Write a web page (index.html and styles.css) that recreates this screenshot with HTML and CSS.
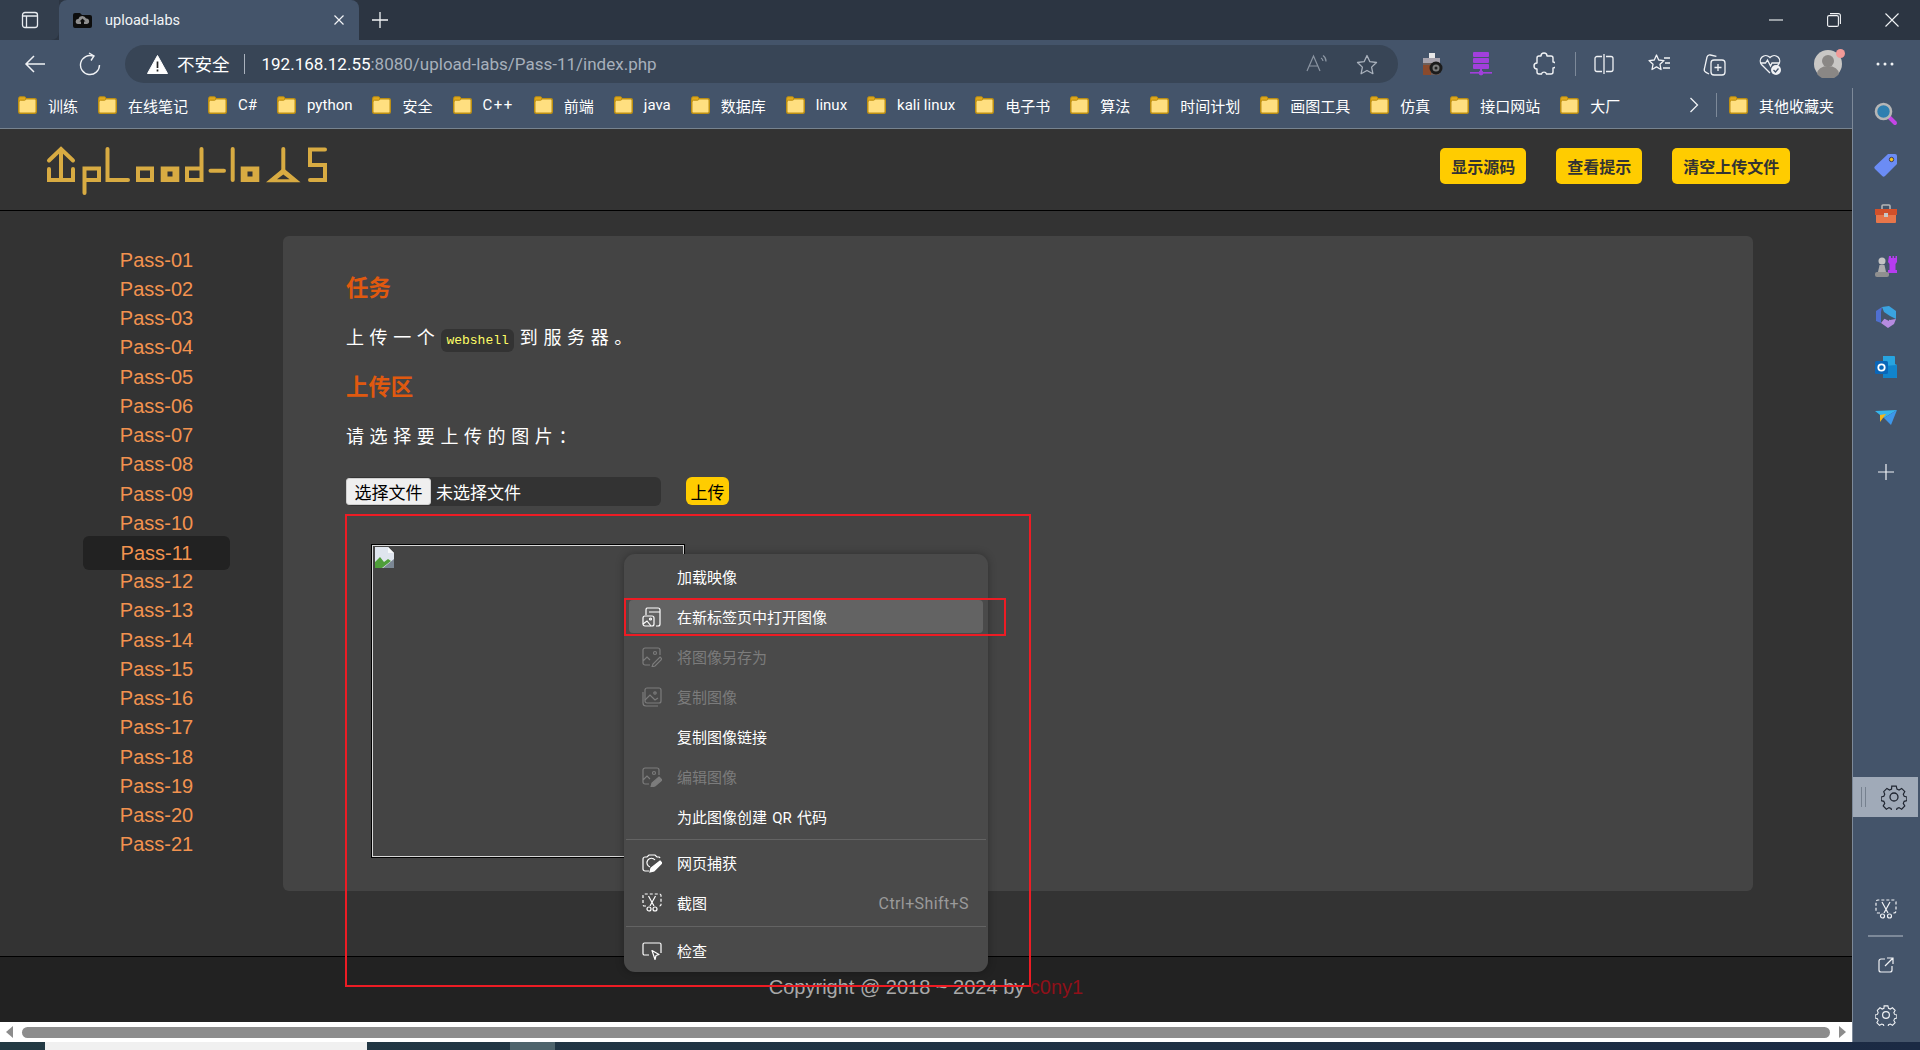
FILE: index.html
```html
<!DOCTYPE html>
<html lang="zh">
<head>
    <meta charset="UTF-8">
    <title>upload-labs</title>
    <link rel="stylesheet" href="styles.css">
</head>
<body>
    <svg class="defs" width="0" height="0">
        <symbol id="folder" viewBox="0 0 19 18">
            <rect x="0.75" y="2.75" width="17.5" height="14.5" rx="1.5" fill="#ffdf80" stroke="#bd8f12" stroke-width="1.5"/>
            <path d="M0.75 5.5V2a1.2 1.2 0 0 1 1.2-1.2h4.5a1.2 1.2 0 0 1 1.2 1.2v1.2a1 1 0 0 1-1 1H2.5z" fill="#e3aa1c" stroke="#bd8f12" stroke-width="1"/>
        </symbol>
    </svg>

    <!-- tab strip -->
    <div class="tabstrip">
        <div class="tab-toggle">
            <svg width="18" height="18" viewBox="0 0 18 18" fill="none" stroke="#e8ebef" stroke-width="1.3"><rect x="1.5" y="1.5" width="15" height="15" rx="2.5"/><path d="M1.5 5h15M5.5 5v11.5" /></svg>
        </div>
        <div class="tab">
            <svg width="19" height="16" viewBox="0 0 19 16"><path d="M0 3a2 2 0 0 1 2-2h5l2 2h8a2 2 0 0 1 2 2v9a2 2 0 0 1-2 2H2a2 2 0 0 1-2-2z" fill="#0d0d0d"/><path d="M5 12a2.5 2.5 0 0 1 .4-5A4 4 0 0 1 13 6.5 2.8 2.8 0 0 1 14 12h-3V9.5h1.5L9.5 6.5l-3 3H8V12z" fill="#8f8f8f"/></svg>
            <span class="tab-title">upload-labs</span>
            <svg class="tab-close" width="12" height="12" viewBox="0 0 12 12" stroke="#f2f4f6" stroke-width="1.2"><path d="M1.5 1.5l9 9M10.5 1.5l-9 9"/></svg>
        </div>
        <svg class="tab-new" width="18" height="18" viewBox="0 0 18 18" stroke="#f2f4f6" stroke-width="1.3"><path d="M9 1v16M1 9h16"/></svg>
        <div class="win-btns">
            <svg width="14" height="14" viewBox="0 0 14 14" stroke="#f2f4f6" stroke-width="1.1"><path d="M0 7h14"/></svg>
            <svg width="14" height="14" viewBox="0 0 14 14" fill="none" stroke="#f2f4f6" stroke-width="1.1"><rect x="0.6" y="2.6" width="10.8" height="10.8" rx="1.5"/><path d="M3 .6h8.4a2 2 0 0 1 2 2V11"/></svg>
            <svg width="14" height="14" viewBox="0 0 14 14" stroke="#f2f4f6" stroke-width="1.1"><path d="M.5.5l13 13M13.5.5l-13 13"/></svg>
        </div>
    </div>

    <!-- address bar -->
    <div class="toolbar">
        <svg class="tb-back" width="22" height="20" viewBox="0 0 22 20" fill="none" stroke="#f0f2f5" stroke-width="1.5"><path d="M21 10H2M10 2l-8 8 8 8"/></svg>
        <svg class="tb-reload" width="22" height="24" viewBox="0 0 22 24" fill="none" stroke="#f0f2f5" stroke-width="1.4"><path d="M14.500 4.200A9.500 9.500 0 1 0 20.500 13"/><path d="M10 1l5 3-3 4.500" /></svg>
        <div class="addr">
            <svg class="addr-warn" width="21" height="19" viewBox="0 0 21 19"><path d="M10.5 0.5L20.5 18.5H0.5z" fill="#fff" stroke="#fff" stroke-linejoin="round"/><path d="M10.5 6.5v6.5M10.5 14.5v2" stroke="#222" stroke-width="1.7"/></svg>
            <span class="addr-warntext">不安全</span>
            <span class="addr-sep"></span>
            <span class="addr-url"><b>192.168.12.55</b>:8080/upload-labs/Pass-11/index.php</span>
            <svg class="addr-read" width="22" height="20" viewBox="0 0 22 20" fill="none" stroke="#8b95a2" stroke-width="1.2"><path d="M1 17L7.5 2 14 17M3.5 12h8"/><path d="M15 4a4 4 0 0 1 2 3M17 1.5a7 7 0 0 1 3 6"/></svg>
            <svg class="addr-star" width="22" height="21" viewBox="0 0 22 21" fill="none" stroke="#a9b1bc" stroke-width="1.3"><path d="M11 1.5l2.9 6.2 6.6.8-4.9 4.6 1.3 6.6L11 16.5l-5.9 3.2 1.3-6.6L1.5 8.5l6.6-.8z" stroke-linejoin="round"/></svg>
        </div>
        <div class="tb-icons">
            <svg class="ti-camera" width="22" height="24" viewBox="0 0 22 24"><rect x="7" y="1" width="6" height="5" fill="#e8e8e8"/><rect x="1" y="6" width="17" height="17" rx="2" fill="#6b5d5a"/><rect x="1" y="6" width="17" height="5" fill="#a7a3ad"/><rect x="1" y="13" width="8" height="10" fill="#8a4a2c"/><circle cx="14" cy="16" r="6.5" fill="#1c1c1c"/><circle cx="14" cy="16" r="3.5" fill="#7b7b7b"/><circle cx="14" cy="16" r="1.5" fill="#222"/></svg>
            <svg class="ti-server" width="22" height="24" viewBox="0 0 22 24" fill="#a23fdc"><rect x="3" y="0" width="16" height="5" rx="1"/><rect x="3" y="6" width="16" height="5" rx="1"/><rect x="3" y="12" width="16" height="5" rx="1"/><rect x="10" y="17" width="2" height="4"/><rect x="0" y="20" width="22" height="1.6"/><circle cx="11" cy="21" r="2.4"/></svg>
            <svg class="ti-puzzle" width="22" height="24" viewBox="0 0 22 24" fill="none" stroke="#f0f2f5" stroke-width="1.4"><path d="M8 4a3 3 0 0 1 6 0h4a2 2 0 0 1 2 2v4a3 3 0 0 1 0 6v4a2 2 0 0 1-2 2h-4.5a2.6 2.6 0 0 0-5 0H6a2 2 0 0 1-2-2v-3a3 3 0 0 1 0-6V6a2 2 0 0 1 2-2z" stroke-linejoin="round"/></svg>
            <span class="ti-sep"></span>
            <svg class="ti-split" width="20" height="20" viewBox="0 0 20 20" fill="none" stroke="#f0f2f5" stroke-width="1.3"><path d="M8 2.5H3a2 2 0 0 0-2 2v11a2 2 0 0 0 2 2h5M12 2.5h5a2 2 0 0 1 2 2v11a2 2 0 0 1-2 2h-5M10 0v20"/></svg>
            <svg class="ti-fav" width="24" height="24" viewBox="0 0 24 24" fill="none" stroke="#f0f2f5" stroke-width="1.3"><path d="M9.5 3l2.2 5 5.3.6-4 3.7 1 5.2-4.5-2.6L5 17.5l1-5.2-4-3.7 5.3-.6z" stroke-linejoin="round"/><path d="M17 6h6M18 11h5M16 16h7"/></svg>
            <svg class="ti-coll" width="24" height="24" viewBox="0 0 24 24" fill="none" stroke="#f0f2f5" stroke-width="1.3"><path d="M7 22l-3-1.6a3 3 0 0 1-1.600-3.600L5 5a3 3 0 0 1 3.400-2l6 1.400"/><rect x="9" y="8" width="14" height="15" rx="3"/><path d="M16 12v7M12.500 15.500h7"/></svg>
            <svg class="ti-heart" width="24" height="24" viewBox="0 0 24 24" fill="none" stroke="#f0f2f5" stroke-width="1.3"><path d="M12 21L3.500 12.500a5.500 5.500 0 0 1 8-7.500l.5.600.5-.6a5.500 5.500 0 0 1 8 7.500L19 14"/><path d="M2.500 11h5l2-3 3 6 1.500-3h7"/><circle cx="18" cy="18" r="5" fill="#f0f2f5" stroke="none"/><path d="M15.500 18l2 2 3-3.500" stroke="#44546a"/></svg>
            <span class="avatar">
                <svg width="28" height="28" viewBox="0 0 28 28"><circle cx="14" cy="14" r="14" fill="#c9c7c5"/><circle cx="14" cy="11" r="6" fill="#8a8785"/><path d="M3 24a11 8 0 0 1 22 0 14 14 0 0 1-22 0z" fill="#8a8785"/></svg>
                <i class="avatar-dot"></i>
            </span>
            <svg class="ti-more" width="18" height="4" viewBox="0 0 18 4" fill="#f0f2f5"><circle cx="2" cy="2" r="1.500"/><circle cx="9" cy="2" r="1.500"/><circle cx="16" cy="2" r="1.500"/></svg>
        </div>
    </div>

    <div class="frame">
        <div class="viewport">
            <!-- bookmarks -->
            <div class="bookmarks">
                <a class="bm"><svg class="bm-ico"><use href="#folder"/></svg>训练</a>
                <a class="bm"><svg class="bm-ico"><use href="#folder"/></svg>在线笔记</a>
                <a class="bm"><svg class="bm-ico"><use href="#folder"/></svg>C#</a>
                <a class="bm"><svg class="bm-ico"><use href="#folder"/></svg>python</a>
                <a class="bm"><svg class="bm-ico"><use href="#folder"/></svg>安全</a>
                <a class="bm bm-wide"><svg class="bm-ico"><use href="#folder"/></svg>C++</a>
                <a class="bm"><svg class="bm-ico"><use href="#folder"/></svg>前端</a>
                <a class="bm"><svg class="bm-ico"><use href="#folder"/></svg>java</a>
                <a class="bm"><svg class="bm-ico"><use href="#folder"/></svg>数据库</a>
                <a class="bm"><svg class="bm-ico"><use href="#folder"/></svg>linux</a>
                <a class="bm"><svg class="bm-ico"><use href="#folder"/></svg>kali linux</a>
                <a class="bm"><svg class="bm-ico"><use href="#folder"/></svg>电子书</a>
                <a class="bm"><svg class="bm-ico"><use href="#folder"/></svg>算法</a>
                <a class="bm"><svg class="bm-ico"><use href="#folder"/></svg>时间计划</a>
                <a class="bm"><svg class="bm-ico"><use href="#folder"/></svg>画图工具</a>
                <a class="bm"><svg class="bm-ico"><use href="#folder"/></svg>仿真</a>
                <a class="bm"><svg class="bm-ico"><use href="#folder"/></svg>接口网站</a>
                <a class="bm"><svg class="bm-ico"><use href="#folder"/></svg>大厂</a>
                <div class="bm-end">
                    <svg width="10" height="16" viewBox="0 0 10 16" fill="none" stroke="#f0f2f5" stroke-width="1.3"><path d="M1.500 1l7 7-7 7"/></svg>
                    <span class="bm-sep"></span>
                    <a class="bm"><svg class="bm-ico"><use href="#folder"/></svg>其他收藏夹</a>
                </div>
            </div>

            <!-- page -->
            <header class="site-head">
                <svg class="logo" width="286" height="52" viewBox="0 0 286 52" fill="none" stroke="#d8ab42" stroke-width="4" stroke-linejoin="miter" stroke-linecap="round">
                    <path d="M4 15.500L16 4 28 15.500M16 4v31M4 24v11h24V24"/>
                    <path d="M39.500 48V23.500H54V35H39.500"/>
                    <path d="M62.500 4v31H83"/>
                    <rect x="93" y="23.500" width="14" height="11.500"/>
                    <path d="M115.700 21.500h18.600V37h-18.600zM122.500 26.500v5h5v-5z" fill="#d8ab42" fill-rule="evenodd" stroke="none"/>
                    <path d="M156.500 4v31H142V23.500h14.500"/>
                    <path d="M165.500 25.700h13.500"/>
                    <path d="M187.700 4v31"/>
                    <path d="M195.700 21.500h18.600V37h-18.600zM202.500 26.500v5h5v-5z" fill="#d8ab42" fill-rule="evenodd" stroke="none"/>
                    <path d="M238.300 4v22"/>
                    <path d="M238.300 23L255.500 37.300H221zM238.300 29.500L232 34.300h12.600z" fill="#d8ab42" fill-rule="evenodd" stroke="none"/>
                    <path d="M280 4.500h-15V20h15v15h-15"/>
                </svg>
                <nav class="head-btns">
                    <a class="yellow-btn">显示源码</a>
                    <a class="yellow-btn">查看提示</a>
                    <a class="yellow-btn">清空上传文件</a>
                </nav>
            </header>

            <div class="content">
                <ul class="pass-list">
                    <li>Pass-01</li>
                    <li>Pass-02</li>
                    <li>Pass-03</li>
                    <li>Pass-04</li>
                    <li>Pass-05</li>
                    <li>Pass-06</li>
                    <li>Pass-07</li>
                    <li>Pass-08</li>
                    <li>Pass-09</li>
                    <li>Pass-10</li>
                    <li class="active">Pass-11</li>
                    <li>Pass-12</li>
                    <li>Pass-13</li>
                    <li>Pass-14</li>
                    <li>Pass-15</li>
                    <li>Pass-16</li>
                    <li>Pass-17</li>
                    <li>Pass-18</li>
                    <li>Pass-19</li>
                    <li>Pass-20</li>
                    <li>Pass-21</li>
                </ul>
                <section class="panel">
                    <h2>任务</h2>
                    <p>上传一个<code>webshell</code>到服务器。</p>
                    <h2>上传区</h2>
                    <p>请选择要上传的图片：</p>
                    <form class="upload-form">
                        <div class="file-input">
                            <span class="file-btn">选择文件</span>
                            <span class="file-name">未选择文件</span>
                        </div>
                        <span class="submit-btn">上传</span>
                    </form>
                    <div class="broken-img">
                        <svg width="19" height="21" viewBox="0 0 19 21"><path d="M0 0h13l6 6v15H0z" fill="#dfe5ee"/><path d="M13 0l6 6h-6z" fill="#f7f9fb"/><path d="M0 21v-6l5-5 4 5 4-3 3 2-9 7z" fill="#4f9e3a"/><path d="M8 21l11-9v9z" fill="#7b8794"/></svg>
                    </div>
                </section>
            </div>

            <footer class="site-foot">Copyright @ 2018 ~ 2024 by <span class="author">c0ny1</span></footer>

            <div class="hscroll">
                <svg width="7" height="12" viewBox="0 0 7 12" fill="#8c8c8c"><path d="M7 0v12L0 6z"/></svg>
                <div class="hscroll-thumb"></div>
                <svg width="7" height="12" viewBox="0 0 7 12" fill="#8c8c8c"><path d="M0 0v12l7-6z"/></svg>
            </div>
        </div>

        <!-- edge sidebar -->
        <aside class="edge">
            <svg class="edge-ico" viewBox="0 0 24 24"><path d="M14 14l7 7" stroke="#c545e6" stroke-width="4" stroke-linecap="round"/><circle cx="9.500" cy="9.500" r="7.500" fill="#2f7fb0" stroke="#b6b6b6" stroke-width="2.600"/></svg>
            <svg class="edge-ico" viewBox="0 0 24 24"><path d="M14 1h7a2 2 0 0 1 2 2v8L11 23a2 2 0 0 1-2.800 0L1 16a2 2 0 0 1 0-2.800z" fill="#6b8cf5"/><circle cx="17.500" cy="6.500" r="2.200" fill="#f2c21a" stroke="#3a3a60"/></svg>
            <svg class="edge-ico" viewBox="0 0 24 24"><path d="M8 6V3a1 1 0 0 1 1-1h6a1 1 0 0 1 1 1v3" fill="none" stroke="#b5b5b5" stroke-width="1.600"/><path d="M1 6h22v6H1z" fill="#d2502a"/><path d="M2 12h20v7a1 1 0 0 1-1 1H3a1 1 0 0 1-1-1z" fill="#e8764a"/><rect x="10" y="10" width="4" height="4" fill="#c8c8c8"/></svg>
            <svg class="edge-ico" viewBox="0 0 24 24"><path d="M16 2h2v2h1.500V2h1.500v2h1.500V2H24v6l-1.500 2v6H24v3h-9v-3h1.500v-6L15 8z" transform="translate(-1 0)" fill="#b63cf0"/><circle cx="8" cy="7" r="3.500" fill="#c4c4c4"/><path d="M5.500 11h5l1.500 7H4z" fill="#adadad"/><rect x="1" y="18" width="14" height="5" rx="2" fill="#8f8f8f"/></svg>
            <svg class="edge-ico" viewBox="0 0 24 24"><path d="M8 2l7-1 7 5v8l-6-3-6-4z" fill="#3aa3e0"/><path d="M8 2L2 6v10l5 2V7z" fill="#4f6fd0"/><path d="M7 18l7 5 6-4 2-5-6 1-5-2z" fill="#b68be0"/><path d="M9 9l6 3v4l-6-3z" fill="#44546a"/></svg>
            <svg class="edge-ico" viewBox="0 0 24 24"><path d="M9 1h11a1 1 0 0 1 1 1v7l2 1v12a1 1 0 0 1-1 1H9z" fill="#27a4e0"/><path d="M9 11l14-1v12a1 1 0 0 1-1 1H9z" fill="#1184cc"/><rect x="1" y="6" width="13" height="13" rx="1.500" fill="#0a66b8"/><circle cx="7.500" cy="12.500" r="3.200" fill="none" stroke="#fff" stroke-width="1.800"/></svg>
            <svg class="edge-ico" viewBox="0 0 24 24"><path d="M1 5l22-1L10 12z" fill="#35b6ee"/><path d="M10 12L23 4 17 19z" fill="#3e97ea"/><path d="M6 9l6-1-6 8z" fill="#f3b51c"/></svg>
            <svg class="edge-plus" width="16" height="16" viewBox="0 0 16 16" stroke="#f0f2f5" stroke-width="1.200"><path d="M8 0v16M0 8h16"/></svg>
            <div class="edge-fill"></div>
            <div class="edge-active">
                <span class="edge-grip"></span>
                <svg width="26" height="26" viewBox="0 0 26 26" fill="none" stroke="#1f2530" stroke-width="1.300"><path d="M10.500 1h5l.8 3.200 2.300 1 2.900-1.700 3.500 3.500-1.700 2.900 1 2.300 0 0 3 .8v4l-3 .8-1 2.300 1.700 2.900-3.500 3.500-2.900-1.700-2.300 1-.8 3h-5l-.8-3-2.300-1-2.900 1.700-3.500-3.500 1.700-2.900-1-2.300-3-.8v-4l3-.8 1-2.300L1.600 7l3.500-3.500L8 5.200l2.300-1z" transform="translate(1.300 1.300) scale(.9)"/><circle cx="13" cy="13" r="4"/></svg>
            </div>
            <svg class="edge-cut" width="22" height="20" viewBox="0 0 22 20" fill="none" stroke="#f0f2f5" stroke-width="1.200"><path d="M5 14H3a2 2 0 0 1-2-2V3a2 2 0 0 1 2-2h16a2 2 0 0 1 2 2v9a2 2 0 0 1-2 2h-2" stroke-dasharray="3 2"/><path d="M7 3l6 11M15 3L9 14"/><circle cx="7.500" cy="17" r="2"/><circle cx="14.500" cy="17" r="2"/></svg>
            <span class="edge-line"></span>
            <svg class="edge-ext" width="16" height="16" viewBox="0 0 16 16" fill="none" stroke="#f0f2f5" stroke-width="1.200"><path d="M7 2H3a2 2 0 0 0-2 2v9a2 2 0 0 0 2 2h9a2 2 0 0 0 2-2V9M9 1h6v6M15 1L7 9"/></svg>
            <svg class="edge-gear" width="22" height="22" viewBox="0 0 26 26" fill="none" stroke="#f0f2f5" stroke-width="1.400"><path d="M10.500 1h5l.8 3.200 2.300 1 2.900-1.700 3.500 3.500-1.700 2.900 1 2.300 3 .8v4l-3 .8-1 2.300 1.700 2.900-3.500 3.500-2.900-1.700-2.300 1-.8 3h-5l-.8-3-2.300-1-2.900 1.700-3.500-3.500 1.700-2.900-1-2.300-3-.8v-4l3-.8 1-2.300L1.600 7l3.500-3.500L8 5.200l2.300-1z" transform="translate(1.300 1.300) scale(.9)"/><circle cx="13" cy="13" r="4"/></svg>
        </aside>
    </div>

    <!-- bit of taskbar under the window -->
    <div class="taskbar">
        <span class="task-a"></span>
        <span class="task-b"></span>
    </div>

    <!-- context menu -->
    <div class="menu">
        <div class="menu-row"><span class="menu-ico"></span>加载映像</div>
        <div class="menu-row hover">
            <svg class="menu-ico" viewBox="0 0 20 20" fill="none" stroke="#fff" stroke-width="1.200"><path d="M7 1h9a2 2 0 0 1 2 2v14a2 2 0 0 1-2 2h-2M7 5h11M7 1L5 1a2 2 0 0 0-1 2v5"/><rect x="1" y="9" width="11" height="10" rx="2"/><circle cx="8.500" cy="12" r="1"/><path d="M1 17l4-3 4 5"/></svg>
            在新标签页中打开图像
        </div>
        <div class="menu-row off">
            <svg class="menu-ico" viewBox="0 0 20 20" fill="none" stroke="#7c7c7c" stroke-width="1.200"><path d="M8 18H3a2 2 0 0 1-2-2V3a2 2 0 0 1 2-2h13a2 2 0 0 1 2 2v5M1 14l4-4 3 3"/><circle cx="13" cy="6" r="1.500"/><path d="M18 10l2 2-7 7-3 1 1-3z"/></svg>
            将图像另存为
        </div>
        <div class="menu-row off">
            <svg class="menu-ico" viewBox="0 0 20 20" fill="none" stroke="#7c7c7c" stroke-width="1.200"><rect x="3" y="1" width="16" height="15" rx="2"/><path d="M1 5v11a3 3 0 0 0 3 3h12M3 13l5-5 5 5 3-2"/><circle cx="13" cy="6" r="1.200"/></svg>
            复制图像
        </div>
        <div class="menu-row"><span class="menu-ico"></span>复制图像链接</div>
        <div class="menu-row off">
            <svg class="menu-ico" viewBox="0 0 20 20" fill="none" stroke="#7c7c7c" stroke-width="1.200"><path d="M7 17H3a2 2 0 0 1-2-2V3a2 2 0 0 1 2-2h12a2 2 0 0 1 2 2v5M1 13l4-4 3 3"/><circle cx="12" cy="6" r="1.500"/><path d="M17 10l3 3-7 6-4 1 1-4z" fill="#7c7c7c"/></svg>
            编辑图像
        </div>
        <div class="menu-row"><span class="menu-ico"></span>为此图像创建 QR 代码</div>
        <div class="menu-sep"></div>
        <div class="menu-row">
            <svg class="menu-ico" viewBox="0 0 20 20" fill="none" stroke="#fff" stroke-width="1.200"><path d="M7 18H3a2 2 0 0 1-2-2V6a2 2 0 0 1 2-2h2l2-2h6l2 2h2a2 2 0 0 1 1 1"/><path d="M8 14a4.500 4.500 0 1 1 5-7"/><path d="M18 8l2 2-8 8-4 1 1-4z" fill="#fff"/></svg>
            网页捕获
        </div>
        <div class="menu-row">
            <svg class="menu-ico" viewBox="0 0 20 20" fill="none" stroke="#fff" stroke-width="1.200"><path d="M4 13H2.500A1.500 1.500 0 0 1 1 11.500v-9A1.500 1.500 0 0 1 2.500 1h15A1.500 1.500 0 0 1 19 2.500v9a1.500 1.500 0 0 1-1.500 1.500H16" stroke-dasharray="3 2"/><path d="M6.500 3l5.500 10M13.500 3L8 13"/><circle cx="7" cy="16" r="2"/><circle cx="13" cy="16" r="2"/></svg>
            截图
            <span class="menu-key">Ctrl+Shift+S</span>
        </div>
        <div class="menu-sep last"></div>
        <div class="menu-row">
            <svg class="menu-ico" viewBox="0 0 20 20" fill="none" stroke="#fff" stroke-width="1.200"><path d="M7 14H2.500A1.500 1.500 0 0 1 1 12.500v-9A1.500 1.500 0 0 1 2.500 2h15A1.500 1.500 0 0 1 19 3.500V12"/><path d="M10 9.500l7 4-3 1-1 4z" stroke-linejoin="round"/></svg>
            检查
        </div>
    </div>

    <!-- red boxes drawn over the screenshot -->
    <div class="mark mark-area"></div>
    <div class="mark mark-row"></div>
</body>
</html>
```

FILE: styles.css
```css
* {
    box-sizing: border-box;
}

html, body {
    margin: 0;
    height: 1050px;
    overflow: hidden;
}

body {
    position: relative;
    display: flex;
    flex-direction: column;
    font-family: Roboto, "Noto Sans CJK SC", sans-serif;
    background-color: #44546a;
}

.defs {
    position: absolute;
}

/* tab strip */
.tabstrip {
    height: 40px;
    flex: none;
    display: flex;
    align-items: center;
    background-color: #2c3542;
}

.tab-toggle {
    width: 59px;
    height: 40px;
    display: flex;
    align-items: center;
    justify-content: center;
    background-color: #333e4d;
    border-radius: 0 0 8px 0;
}

.tab {
    width: 300px;
    height: 40px;
    padding: 0 14px;
    display: flex;
    align-items: center;
    background-color: #44546a;
    border-radius: 8px 8px 0 0;
    color: #f2f4f6;
}

.tab-title {
    margin-left: 13px;
    font-size: 14.5px;
}

.tab-close {
    margin-left: auto;
}

.tab-new {
    margin-left: 12px;
}

.win-btns {
    margin-left: auto;
    padding-right: 21px;
    display: flex;
    gap: 44px;
}

/* toolbar */
.toolbar {
    height: 43px;
    flex: none;
    display: flex;
    align-items: flex-end;
    background-color: #44546a;
}

.tb-back {
    margin: 0 0 9px 24px;
}

.tb-reload {
    margin: 0 0 7px 33px;
}

.addr {
    width: 1273px;
    height: 38px;
    margin-left: 24px;
    padding: 0 20px 0 22px;
    display: flex;
    align-items: center;
    background-color: #384556;
    border-radius: 19px;
    color: #fff;
}

.addr-warntext {
    margin: -2px 0 0 9px;
    font-size: 17.5px;
}

.addr-sep {
    width: 1px;
    height: 20px;
    margin: 0 17px 0 14px;
    background-color: #aab2bd;
}

.addr-url {
    margin-top: -1px;
    font-size: 17px;
    color: #a7b0bb;
    white-space: nowrap;
}

.addr-url b {
    font-weight: 400;
    color: #fff;
}

.addr-read {
    margin-left: auto;
}

.addr-star {
    margin-left: 28px;
}

.tb-icons {
    flex: 1;
    height: 38px;
    display: flex;
    align-items: center;
}

.ti-camera {
    margin-left: 24px;
}

.ti-server {
    margin-left: 26px;
}

.ti-puzzle {
    margin-left: 41px;
}

.ti-sep {
    width: 1px;
    height: 24px;
    margin-left: 20px;
    background-color: #7d8999;
}

.ti-split {
    margin-left: 18px;
}

.ti-fav {
    margin-left: 33px;
}

.ti-coll {
    margin-left: 31px;
}

.ti-heart {
    margin-left: 32px;
}

.avatar {
    position: relative;
    width: 28px;
    height: 28px;
    margin-left: 32px;
}

.avatar-dot {
    position: absolute;
    top: -1px;
    right: -3px;
    width: 9px;
    height: 9px;
    border-radius: 50%;
    background-color: #f29a98;
}

.ti-more {
    margin-left: 34px;
}

/* main window area */
.frame {
    flex: 1;
    display: flex;
    min-height: 0;
}

.viewport {
    width: 1852px;
    flex: none;
    display: flex;
    flex-direction: column;
}

.bookmarks {
    height: 46px;
    flex: none;
    padding: 0 0 1px 18px;
    display: flex;
    align-items: center;
    gap: 20px;
    background-color: #44546a;
    border-bottom: 1px solid #77838f;
}

.bm {
    display: flex;
    align-items: center;
    gap: 11px;
    font-size: 15px;
    color: #fff;
    white-space: nowrap;
}

.bm-wide {
    letter-spacing: 1.5px;
}

.bm-ico {
    width: 19px;
    height: 18px;
}

.bm-end {
    margin-left: auto;
    padding-right: 18px;
    display: flex;
    align-items: center;
    gap: 12px;
}

.bm-sep {
    width: 1px;
    height: 24px;
    margin-left: 5px;
    background-color: #7d8999;
}

/* page header */
.site-head {
    height: 82px;
    flex: none;
    padding: 0 62px 7px 45px;
    display: flex;
    align-items: center;
    justify-content: space-between;
    background-color: #333;
    border-bottom: 1px solid #000;
}

.logo {
    align-self: flex-start;
    margin-top: 16px;
}

.head-btns {
    display: flex;
    gap: 30.5px;
}

.yellow-btn {
    height: 36px;
    padding: 0 10.75px;
    display: flex;
    align-items: center;
    font-size: 16px;
    font-weight: 600;
    color: #333;
    background-color: #fc0;
    border-radius: 5px;
}

/* page body */
.content {
    height: 746px;
    flex: none;
    display: flex;
    background-color: #333;
    border-bottom: 1px solid #000;
}

.pass-list {
    width: 283px;
    flex: none;
    margin: 0;
    padding: 34.5px 53px 0 83px;
    list-style: none;
    font-family: "Liberation Sans", sans-serif;
    font-size: 20px;
    line-height: 29.25px;
    text-align: center;
    color: #f2924f;
}

.pass-list .active {
    height: 34px;
    margin: -2.5px 0;
    line-height: 34px;
    background-color: #222;
    border-radius: 6px;
}

.panel {
    width: 1470px;
    height: 655px;
    margin-top: 25px;
    padding: 37px 63px 0;
    background-color: #444;
    border-radius: 6px;
    color: #fff;
}

.panel h2 {
    margin: 0;
    font-size: 22.4px;
    line-height: 30px;
    color: #e0590f;
}

.panel p {
    margin: 22px 0 17.5px;
    font-size: 18px;
    line-height: 26px;
    letter-spacing: 5.6px;
}

.panel code {
    margin: 0 6px 0 1px;
    padding: 4px 5px;
    font-family: "Liberation Mono", monospace;
    font-size: 13px;
    letter-spacing: 0;
    color: #ffff66;
    background-color: #333;
    border-radius: 6px;
}

.upload-form {
    margin-top: 27px;
    display: flex;
    align-items: center;
    gap: 25px;
}

.file-input {
    width: 315px;
    height: 29px;
    display: flex;
    align-items: center;
    background-color: #333;
    border-radius: 6px;
    font-size: 17px;
}

.file-btn {
    width: 85px;
    height: 27px;
    display: flex;
    align-items: center;
    justify-content: center;
    color: #000;
    background-color: #efefef;
    border: 1px solid #cfcfcf;
    border-radius: 3px;
}

.file-name {
    margin-left: 5px;
    color: #fff;
}

.submit-btn {
    width: 43px;
    height: 28px;
    display: flex;
    align-items: center;
    justify-content: center;
    font-size: 17px;
    color: #000;
    background-color: #fc0;
    border-radius: 6px;
}

.broken-img {
    width: 314px;
    height: 314px;
    margin: 38.5px 0 0 25px;
    padding: 2px 3px;
    border: 1px solid #000;
    box-shadow: inset 0 0 0 1px #d8d8d8;
}

.broken-img svg {
    display: block;
}

.site-foot {
    height: 65px;
    flex: none;
    padding-top: 19px;
    text-align: center;
    font-family: "Liberation Sans", sans-serif;
    font-size: 20px;
    color: #a9a9a9;
    background-color: #222;
}

.author {
    color: #8f1019;
}

.hscroll {
    height: 20px;
    flex: none;
    padding: 0 6px;
    display: flex;
    align-items: center;
    gap: 9px;
    background-color: #fff;
}

.hscroll-thumb {
    flex: 1;
    height: 11px;
    background-color: #8c8c8c;
    border-radius: 6px;
}

/* edge sidebar */
.edge {
    flex: 1;
    margin-top: 5px;
    padding-right: 2px;
    display: flex;
    flex-direction: column;
    align-items: center;
    border-left: 1px solid #7d8999;
    background-color: #44546a;
}

.edge-ico {
    width: 24px;
    height: 24px;
    margin-top: 26.7px;
    flex: none;
}

.edge-ico:first-child {
    margin-top: 14px;
}

.edge-plus {
    margin-top: 34px;
    flex: none;
}

.edge-fill {
    flex: 1;
}

.edge-active {
    width: 65px;
    height: 40px;
    flex: none;
    align-self: flex-start;
    padding-left: 8px;
    display: flex;
    align-items: center;
    gap: 15px;
    background-color: #a0aab8;
}

.edge-grip {
    width: 5px;
    height: 20px;
    border-left: 1px solid #76818f;
    border-right: 1px solid #76818f;
}

.edge-cut {
    margin-top: 82px;
    flex: none;
}

.edge-line {
    width: 35px;
    height: 2px;
    margin-top: 16px;
    flex: none;
    background-color: #7d8999;
}

.edge-ext {
    margin-top: 20px;
    flex: none;
}

.edge-gear {
    margin: 31px 0 16px;
    flex: none;
}

/* taskbar */
.taskbar {
    height: 8px;
    flex: none;
    display: flex;
    background: linear-gradient(90deg, #233a44, #1b2a44);
}

.task-a {
    width: 322px;
    margin-left: 45px;
    background-color: #f0f0f0;
}

.task-b {
    width: 45px;
    margin-left: 143px;
    background-color: #4e646c;
}

/* context menu */
.menu {
    position: absolute;
    left: 624px;
    top: 554px;
    width: 364px;
    padding: 3px 0 1px;
    display: flex;
    flex-direction: column;
    font-size: 15px;
    word-spacing: 1.5px;
    color: #fff;
    background-color: #4a4a4a;
    border-radius: 11px;
    box-shadow: 0 0 8px rgba(0, 0, 0, 0.3);
}

.menu-row {
    height: 33px;
    margin: 3px 5px 4px;
    padding: 0 14px 0 13px;
    display: flex;
    align-items: center;
    border-radius: 4px;
}

.menu-row.hover {
    background-color: #636363;
}

.menu-row.off {
    color: #7c7c7c;
}

.menu-ico {
    width: 20px;
    height: 20px;
    margin-right: 15px;
    flex: none;
}

.menu-key {
    margin: 1px 0 0 auto;
    font-size: 16px;
    letter-spacing: 0.4px;
    color: #9a9a9a;
}

.menu-sep {
    height: 1px;
    margin: 2px 2px 3px;
    background-color: #636363;
}

.menu-sep.last {
    margin: 3px 2px 4px;
}

/* annotations */
.mark {
    position: absolute;
    border: 2px solid #ed1c24;
}

.mark-area {
    left: 345px;
    top: 514px;
    width: 686px;
    height: 473px;
}

.mark-row {
    left: 624px;
    top: 598px;
    width: 382px;
    height: 38px;
}
```
